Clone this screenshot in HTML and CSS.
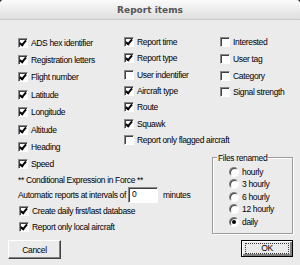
FILE: index.html
```html
<!DOCTYPE html>
<html lang="en">
<head>
  <meta charset="UTF-8" />
  <title>Report items</title>
  <link rel="stylesheet" href="styles.css">
</head>
<body>
  <div class="window">
    <div class="titlebar">Report items</div>
    <div class="content">
      <div class="main">
        <div class="left">
          <div class="cols">
            <div class="list col1">
              <div class="item"><span class="box on"></span>ADS hex identifier</div>
              <div class="item"><span class="box on"></span>Registration letters</div>
              <div class="item"><span class="box on"></span>Flight number</div>
              <div class="item"><span class="box on"></span>Latitude</div>
              <div class="item"><span class="box on"></span>Longitude</div>
              <div class="item"><span class="box on"></span>Altitude</div>
              <div class="item"><span class="box on"></span>Heading</div>
              <div class="item"><span class="box on"></span>Speed</div>
            </div>
            <div class="list col2">
              <div class="item"><span class="box on"></span>Report time</div>
              <div class="item"><span class="box on"></span>Report type</div>
              <div class="item"><span class="box"></span>User indentifier</div>
              <div class="item"><span class="box on"></span>Aircraft type</div>
              <div class="item"><span class="box on"></span>Route</div>
              <div class="item"><span class="box on"></span>Squawk</div>
              <div class="item"><span class="box"></span>Report only flagged aircraft</div>
            </div>
          </div>
          <div class="lower">
            <div class="note">** Conditional Expression in Force **</div>
            <div class="interval">
              <span>Automatic reports at intervals of</span>
              <span class="field">0</span>
              <span class="unit">minutes</span>
            </div>
            <div class="item row"><span class="box on"></span>Create daily first/last database</div>
            <div class="item row"><span class="box on"></span>Report only local aircraft</div>
          </div>
        </div>
        <div class="right">
          <div class="list col3">
            <div class="item"><span class="box"></span>Interested</div>
            <div class="item"><span class="box"></span>User tag</div>
            <div class="item"><span class="box"></span>Category</div>
            <div class="item"><span class="box"></span>Signal strength</div>
          </div>
          <fieldset class="group">
            <legend>Files renamed</legend>
            <div class="radio"><span class="dot"></span>hourly</div>
            <div class="radio"><span class="dot"></span>3 hourly</div>
            <div class="radio"><span class="dot"></span>6 hourly</div>
            <div class="radio"><span class="dot"></span>12 hourly</div>
            <div class="radio"><span class="dot on"></span>daily</div>
          </fieldset>
        </div>
      </div>
      <div class="buttons">
        <div class="btn cancel">Cancel</div>
        <div class="btn ok"><span>OK</span></div>
      </div>
    </div>
  </div>
</body>
</html>
```

FILE: styles.css
```css
body {
  margin: 0;
  padding: 0;
  background: #2a2a2a;
  font-family: 'Liberation Sans', Arial, sans-serif;
  font-size: 8.5px;
  letter-spacing: -0.35px;
  color: #000;
}
.window {
  width: 300px;
  height: 265px;
  background: #ebebeb;
  border-radius: 4px 4px 0 0;
  overflow: hidden;
}
.titlebar {
  height: 20px;
  box-sizing: border-box;
  line-height: 20px;
  text-align: center;
  font-family: 'DejaVu Sans', sans-serif;
  font-weight: bold;
  font-size: 9px;
  letter-spacing: 0;
  color: #555;
  background: linear-gradient(#fbfbfb, #dedede);
  border-bottom: 1px solid #c9c9c9;
}
.content {
  padding: 14px 7px 0 8px;
}
.main {
  display: flex;
}
.left {
  width: 204px;
}
.cols {
  display: flex;
  padding-left: 10px;
}
.list {
  display: flex;
  flex-direction: column;
}
.col1 { width: 106px; }
.col1 .item { height: 17.4px; }
.col2 { width: 88px; }
.col2 .item { height: 16.3px; }
.col3 { padding-left: 8px; }
.col3 .item { height: 16.67px; }
.item {
  display: flex;
  align-items: center;
  white-space: nowrap;
}
.box {
  width: 10px;
  height: 10px;
  box-sizing: border-box;
  margin-right: 3px;
  background: #fff;
  border: 1px solid;
  border-color: #8a8a8a #fff #fff #8a8a8a;
  box-shadow: inset 1px 1px 0 #404040;
  flex-shrink: 0;
  position: relative;
}
.box.on::after {
  content: "";
  position: absolute;
  left: 2px;
  top: 0px;
  width: 2px;
  height: 5px;
  border: solid #000;
  border-width: 0 2px 2px 0;
  transform: rotate(40deg);
}
.lower {
  padding-left: 10px;
}
.note {
  height: 14px;
  line-height: 14px;
  white-space: nowrap;
}
.interval {
  display: flex;
  align-items: center;
  height: 16px;
  white-space: nowrap;
}
.field {
  width: 30px;
  height: 16px;
  box-sizing: border-box;
  margin-left: 2px;
  padding-left: 3px;
  line-height: 13px;
  background: #fff;
  border: 1px solid;
  border-color: #8a8a8a #fff #fff #8a8a8a;
  box-shadow: inset 1px 1px 0 #404040;
}
.unit {
  margin-left: 5px;
}
.lower .row {
  height: 16px;
  margin-left: 1px;
}
.lower .row:first-of-type { margin-top: 1px; }
.right {
  width: 81px;
  display: flex;
  flex-direction: column;
}
.group {
  margin: 52px 0 0 0;
  padding: 3px 0 5px 0;
  border: 1px solid #9c9c9c;
  box-shadow: 1px 1px 0 #fff, inset 1px 1px 0 #fff;
  min-inline-size: 0;
}
.group legend {
  padding: 0 1px;
  margin-left: 4px;
  line-height: 10px;
  white-space: nowrap;
}
.radio {
  display: flex;
  align-items: center;
  height: 12.5px;
  padding-left: 16px;
  white-space: nowrap;
}
.dot {
  width: 10px;
  height: 10px;
  box-sizing: border-box;
  margin-right: 3px;
  border-radius: 50%;
  background: #fff;
  border: 1px solid;
  border-color: #808080 #fff #fff #808080;
  box-shadow: inset 1px 1px 0 #404040;
  position: relative;
}
.dot.on::after {
  content: "";
  position: absolute;
  left: 2px;
  top: 2px;
  width: 4px;
  height: 4px;
  border-radius: 50%;
  background: #000;
}
.buttons {
  display: flex;
  justify-content: space-between;
  margin-top: 5px;
}
.btn {
  width: 53px;
  height: 19px;
  box-sizing: border-box;
  display: flex;
  align-items: center;
  justify-content: center;
  background: #ebebeb;
  border: 1px solid;
  border-color: #fff #404040 #404040 #fff;
  box-shadow: inset -1px -1px 0 #808080;
}
.btn.ok {
  width: 52px;
  height: 17px;
  border: 1px solid #000;
  box-shadow: inset 1px 1px 0 #fff, inset -2px -2px 0 #808080;
}
.btn.ok span {
  flex: 1;
  margin: 3px;
  text-align: center;
  line-height: 9px;
  border: 1px dotted #333;
}
```
